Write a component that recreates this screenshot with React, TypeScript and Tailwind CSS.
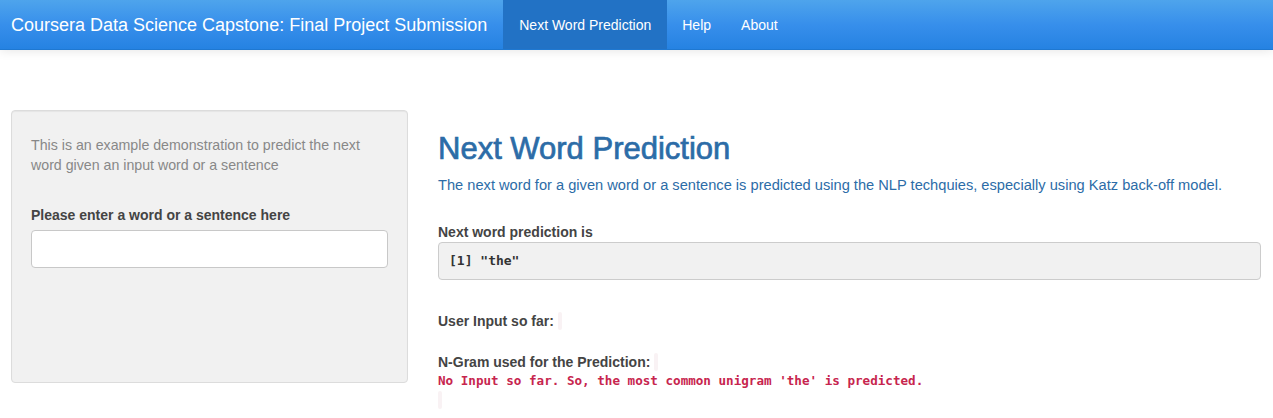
import React from "react";

export default function App() {
  const sans = { fontFamily: '"Liberation Sans", Arial, Helvetica, sans-serif' };
  const mono = { fontFamily: '"DejaVu Sans Mono", Menlo, monospace' };
  return (
    <div className="min-h-[418px] bg-white text-[14px] leading-[20px] text-[#555]" style={sans}>
      <nav className="flex h-[50px] items-stretch border-b border-[#1f78d1] bg-gradient-to-b from-[#4ea4ec] via-[#378feb] to-[#2582e2] shadow-[0_1px_10px_rgba(0,0,0,0.1)]">
        <div className="flex items-center pl-[11px] pr-[15px] text-[18px] text-white">
          Coursera Data Science Capstone: Final Project Submission
        </div>
        <div className="ml-[1px] flex items-stretch text-[14px] text-white">
          <div className="flex items-center bg-[#2272c5] px-[16px]">Next Word Prediction</div>
          <div className="flex items-center px-[15px]">Help</div>
          <div className="flex items-center px-[15px]">About</div>
        </div>
      </nav>

      <div className="flex pt-[60px]">
        <div className="ml-[11px] w-[397px] shrink-0">
          <div className="h-[273px] rounded-[4px] border border-[#dcdcdc] bg-[#f1f1f1] px-[19px] pt-[24px] shadow-[inset_0_1px_1px_rgba(0,0,0,0.05)]">
            <p className="text-[14.2px] text-[#888]">
              This is an example demonstration to predict the next word given an input word or a sentence
            </p>
            <div className="mt-[30px] font-bold text-[#444]">Please enter a word or a sentence here</div>
            <div className="mt-[5px] h-[38px] rounded-[4px] border border-[#c8c8c8] bg-white" />
          </div>
        </div>

        <div className="ml-[30px] flex-1 pr-[12px]">
          <h2 className="mt-[19px] text-[31px] leading-[40px] text-[#2c6ca7] [-webkit-text-stroke:0.7px_#2c6ca7]">
            Next Word Prediction
          </h2>
          <p className="mt-[6px] text-[14.65px] text-[#2c6ca7]">
            The next word for a given word or a sentence is predicted using the NLP techquies, especially using Katz back-off model.
          </p>
          <div className="mt-[27px] font-bold text-[#444]">Next word prediction is</div>
          <pre
            className="mt-[0px] h-[38px] rounded-[4px] border border-[#ccc] bg-[#f1f1f1] px-[10px] pt-[8px] text-[13px] font-bold leading-[19px] text-[#333]"
            style={mono}
          >
            [1] "the"
          </pre>
          <div className="mt-[31px] flex items-center font-bold text-[#444]">
            User Input so far:
            <span className="ml-[4px] inline-block h-[18px] w-[4px] rounded-[2px] bg-[#f9f2f4]" />
          </div>
          <div className="mt-[21px] flex items-center font-bold text-[#444]">
            N-Gram used for the Prediction:
            <span className="ml-[4px] inline-block h-[18px] w-[4px] rounded-[2px] bg-[#f9f2f4]" />
          </div>
          <div className="text-[12.6px] font-bold leading-[18px] text-[#c7254e]" style={mono}>
            No Input so far. So, the most common unigram 'the' is predicted.
          </div>
          <span className="mt-[1px] block h-[18px] w-[4px] rounded-[2px] bg-[#f9f2f4]" />
        </div>
      </div>
    </div>
  );
}
